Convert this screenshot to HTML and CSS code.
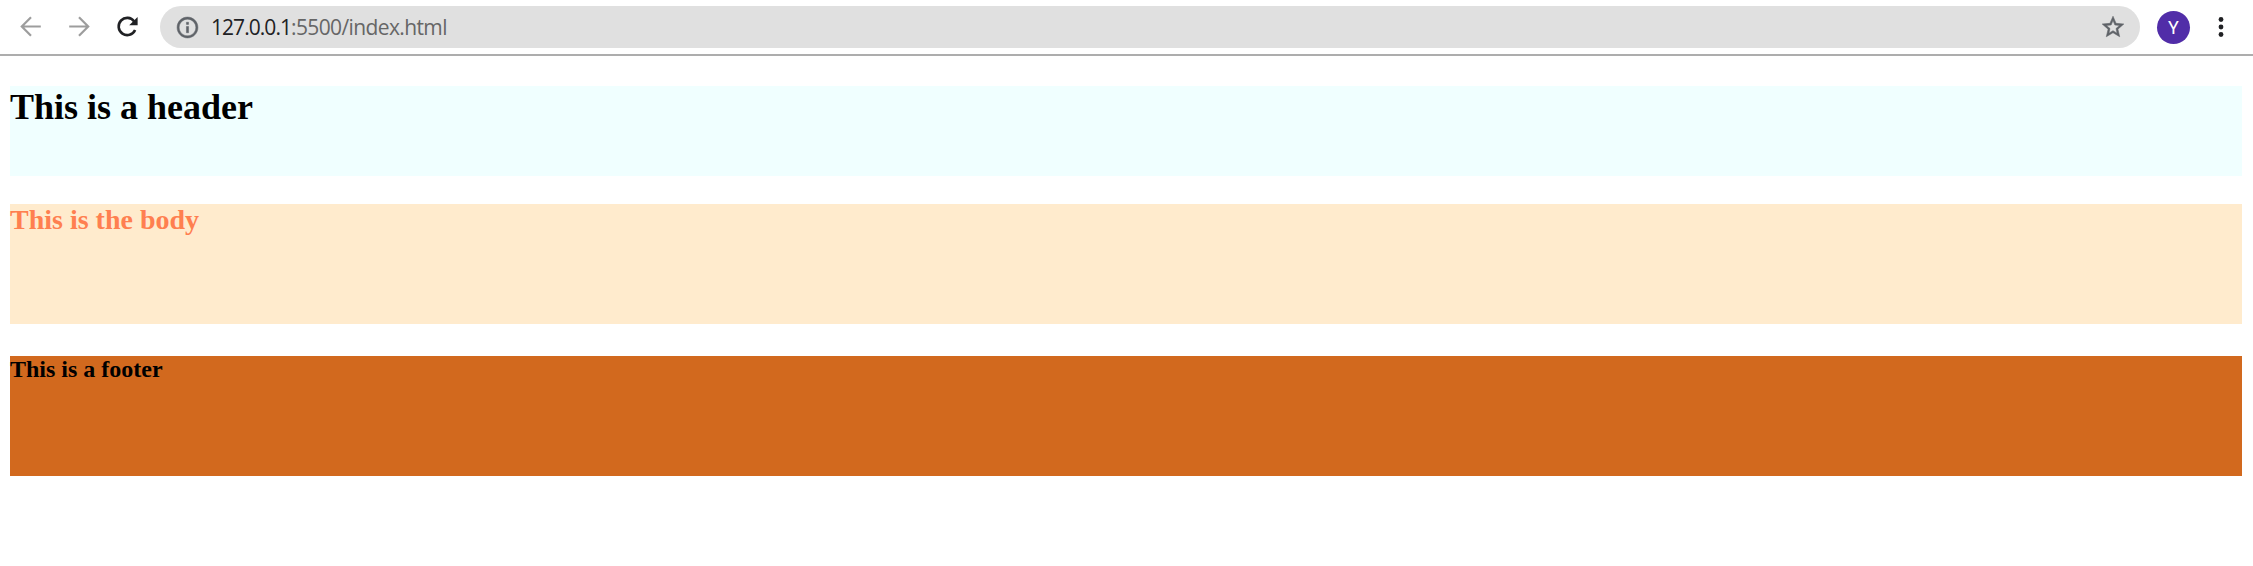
FILE: index.html
```html
<!DOCTYPE html>
<html lang="en">
<head>
<meta charset="utf-8">
<title>127.0.0.1:5500/index.html</title>
<link rel="stylesheet" href="styles.css">
</head>
<body>
<nav class="toolbar">
  <svg class="icon back" viewBox="0 0 30 30"><path d="M24.8 14.5H6M15 5.3L5.8 14.5L15 23.7"/></svg>
  <svg class="icon forward" viewBox="0 0 30 30"><path d="M5.2 14.5H24M15 5.3L24.2 14.5L15 23.7"/></svg>
  <svg class="icon reload" viewBox="0 0 30 30"><path class="arc" d="M22.2 9.4A8.6 8.6 0 1 0 23.1 18"/><path class="tip" d="M25.6 5V13.2H17.2Z"/></svg>
  <div class="address">
    <svg class="info" viewBox="0 0 24 24"><path d="M11 17h2v-6h-2v6zm0-8h2V7h-2v2zm1-7C6.48 2 2 6.48 2 12s4.48 10 10 10 10-4.48 10-10S17.52 2 12 2zm0 18c-4.41 0-8-3.59-8-8s3.59-8 8-8 8 3.59 8 8-3.59 8-8 8z"/></svg>
    <span class="url"><span class="host">127.0.0.1</span><span class="path">:5500/index.html</span></span>
    <svg class="star" viewBox="0 0 24 24"><path d="M22 9.24l-7.19-.62L12 2 9.19 8.63 2 9.24l5.46 4.73L5.82 21 12 17.27 18.18 21l-1.63-7.03L22 9.24zM12 15.4l-3.76 2.27 1-4.28-3.32-2.88 4.38-.38L12 6.1l1.71 4.04 4.38.38-3.32 2.88 1 4.28L12 15.4z"/></svg>
  </div>
  <div class="avatar">Y</div>
  <svg class="menu" viewBox="0 0 6 20"><circle cx="3" cy="2.5" r="2.4"/><circle cx="3" cy="10" r="2.4"/><circle cx="3" cy="17.5" r="2.4"/></svg>
</nav>
<main class="page">
  <header class="block header"><h1 class="title">This is a header</h1></header>
  <section class="block content"><h2 class="title">This is the body</h2></section>
  <footer class="block footer"><h3 class="title">This is a footer</h3></footer>
</main>
</body>
</html>
```
FILE: styles.css
```css
* { box-sizing: border-box; }
body { margin: 0; background: #fff; font-family: "Liberation Serif", serif; }
.toolbar {
  display: flex;
  align-items: center;
  height: 56px;
  padding: 0 29px 0 16px;
  border-bottom: 2px solid #adadad;
}
.icon { width: 30px; height: 30px; margin-right: 18px; fill: none; stroke: #9d9d9d; stroke-width: 2.2; }
.reload { stroke: #202124; stroke-width: 2.6; }
.reload .tip { fill: #202124; stroke: none; }
.address {
  display: flex;
  align-items: center;
  width: 1980px;
  height: 42px;
  border-radius: 21px;
  padding: 0 14px 0 15px;
  background: #e0e0e0;
}
.info { width: 25px; height: 25px; fill: #5f6368; stroke: #5f6368; stroke-width: 0.5; }
.star { width: 26px; height: 26px; margin-left: auto; fill: #5f6368; stroke: #5f6368; stroke-width: 0.5; }
.url { margin-left: 11px; font: 21px/28px "Open Sans", sans-serif; white-space: nowrap; }
.host { color: #202124; letter-spacing: -0.95px; }
.path { color: #666; letter-spacing: -0.62px; }
.avatar {
  width: 33px;
  height: 33px;
  margin: 1px 0 0 17px;
  border-radius: 50%;
  background: #512da8;
  color: #fff;
  font: 18px/33px Roboto, sans-serif;
  text-align: center;
}
.menu { width: 6px; height: 20px; margin-left: 28px; fill: #202124; }
.page { padding: 30px 11px 0 10px; }
.title { margin: 0; font-weight: bold; }
.header { height: 90px; margin-bottom: 28px; background: azure; }
.header .title { font-size: 36px; line-height: 43px; }
.content { height: 120px; margin-bottom: 32px; background: blanchedalmond; color: coral; }
.content .title { font-size: 28px; line-height: 32px; }
.footer { height: 120px; background: chocolate; color: #000; }
.footer .title { font-size: 24px; line-height: 27px; }
```
